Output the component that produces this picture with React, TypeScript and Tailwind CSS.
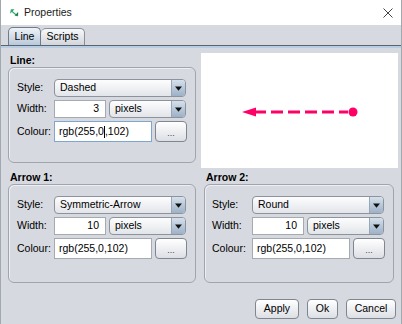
import React from "react";

const Combo = ({ w, text }: { w: string; text: string }) => (
  <div
    className={`${w} h-full flex items-stretch rounded-[4px] border border-[#8d939b] bg-gradient-to-b from-[#fdfdfe] to-[#e2e5e9] overflow-hidden`}
  >
    <div className="flex-1 flex items-center pl-[5px] text-black">{text}</div>
    <div className="w-[14px] flex items-center justify-center border-l border-[#9aa6b3] bg-gradient-to-b from-[#d5e0ec] to-[#9db1c7]">
      <svg width="7" height="5" viewBox="0 0 7 5">
        <path d="M0 0.5 H7 L3.5 4.8 Z" fill="#111" />
      </svg>
    </div>
  </div>
);

const Btn = ({ w, children }: { w: string; children: React.ReactNode }) => (
  <div
    className={`${w} h-full flex items-center justify-center rounded-[4px] border border-[#80868f] bg-gradient-to-b from-[#ffffff] to-[#dcdfe4] text-black shadow-[inset_0_1px_0_#ffffff]`}
  >
    {children}
  </div>
);

const Input = ({ w, children, right, focus }: { w: string; children: React.ReactNode; right?: boolean; focus?: boolean }) => (
  <div
    className={`${w} h-full flex items-center bg-white border ${focus ? "border-[#7fa6cf]" : "border-[#a5aab1]"} ${right ? "justify-end pr-[6px]" : "pl-[4px]"} text-black`}
  >
    {children}
  </div>
);

const Group = ({
  h,
  labelW,
  labelPl,
  style,
  width,
  caret,
}: {
  h: string;
  labelW: string;
  labelPl: string;
  style: string;
  width: string;
  caret?: boolean;
}) => (
  <div
    className={`${h} w-full rounded-[6px] border border-[#a0a5ac] shadow-[inset_1px_1px_0_#eceef1] flex flex-col gap-[3px] pt-[11px]`}
  >
    <div className={`flex items-center h-[18px] ${labelPl}`}>
      <div className={`${labelW} shrink-0`}>Style:</div>
      <Combo w="w-[132px]" text={style} />
    </div>
    <div className={`flex items-center h-[18px] ${labelPl}`}>
      <div className={`${labelW} shrink-0`}>Width:</div>
      <Input w="w-[52px]" right>
        {width}
      </Input>
      <div className="w-[3px]" />
      <Combo w="w-[77px]" text="pixels" />
    </div>
    <div className={`flex items-center h-[21px] ${labelPl}`}>
      <div className={`${labelW} shrink-0`}>Colour:</div>
      <Input w="w-[98px]" focus={caret}>
        {caret ? (
          <span className="flex items-center">
            rgb(255,0<span className="inline-block w-[1px] h-[12px] bg-black" />,102)
          </span>
        ) : (
          "rgb(255,0,102)"
        )}
      </Input>
      <div className="w-[3px]" />
      <Btn w="w-[32px]">
        <span className="text-[9px] leading-none pt-[3px] text-[#444]">...</span>
      </Btn>
    </div>
  </div>
);

export default function App() {
  return (
    <div
      className="w-[402px] h-[324px] bg-[#d6d9df] flex flex-col border-x border-[#a3a7ae] text-[10.5px] text-black overflow-hidden"
      style={{ fontFamily: '"Liberation Sans", Arial, sans-serif' }}
    >
      {/* Title bar */}
      <div className="h-[25px] bg-white flex items-center shrink-0">
        <svg className="ml-[9px]" width="9" height="9" viewBox="0 0 10 9">
          <path d="M1 1 L5 1 L3 3 L9 8 L8 9 L2 4 L0 6 Z" fill="#2fa86a" />
          <path d="M5 8 L9 8 L9 4 Z" fill="#1d7f4e" />
        </svg>
        <span className="ml-[5px] text-[10.5px] text-[#222]">Properties</span>
        <div className="flex-1" />
        <svg className="mr-[8px]" width="10" height="10" viewBox="0 0 10 10">
          <path d="M0.5 0.5 L9.5 9.5 M9.5 0.5 L0.5 9.5" stroke="#444" strokeWidth="1" />
        </svg>
      </div>

      {/* Tabs */}
      <div className="h-[20px] flex items-end pl-[7px] shrink-0">
        <div className="h-[18px] w-[33px] flex items-center justify-center rounded-t-[5px] border border-b-0 border-[#737a85] bg-gradient-to-b from-[#eef3f8] to-[#b9c9db]">
          Line
        </div>
        <div className="h-[17px] w-[44px] flex items-center justify-center rounded-t-[5px] border border-b-0 border-l-0 border-[#8a9099] bg-gradient-to-b from-[#f7f8f9] to-[#d2d6dc]">
          Scripts
        </div>
      </div>
      <div className="h-[1px] bg-[#5d636c] shrink-0" />
      <div className="h-[2px] bg-[#b7cde3] shrink-0" />

      {/* Content */}
      <div className="flex flex-col pt-[5px]">
        <div className="flex items-start pl-[7px]">
          <div className="w-[188px] flex flex-col">
            <div className="h-[14px] leading-[14px] pl-[2px] font-bold">Line:</div>
            <Group h="h-[96px]" labelW="w-[37px]" labelPl="pl-[8px]" style="Dashed" width="3" caret />
          </div>
          <div className="ml-[5px] w-[197px] h-[115px] bg-white">
            <svg width="197" height="115" viewBox="0 0 197 115">
              <line x1="53" y1="59" x2="147" y2="59" stroke="#ff0066" strokeWidth="3" strokeDasharray="12 5" />
              <path d="M41 59 L55 54.5 L55 63.5 Z" fill="#ff0066" />
              <circle cx="152" cy="59" r="4.5" fill="#ff0066" />
            </svg>
          </div>
        </div>

        <div className="flex items-start pl-[7px] mt-[2px]">
          <div className="w-[188px] flex flex-col">
            <div className="h-[14px] leading-[14px] pl-[2px] font-bold">Arrow 1:</div>
            <Group h="h-[99px]" labelW="w-[37px]" labelPl="pl-[8px]" style="Symmetric-Arrow" width="10" />
          </div>
          <div className="ml-[8px] w-[190px] flex flex-col">
            <div className="h-[14px] leading-[14px] pl-[2px] font-bold">Arrow 2:</div>
            <Group h="h-[99px]" labelW="w-[40px]" labelPl="pl-[7px]" style="Round" width="10" />
          </div>
        </div>

        <div className="h-[20px] mt-[16px] flex justify-end pr-[5px] gap-[8px]">
          <Btn w="w-[44px]">Apply</Btn>
          <Btn w="w-[31px]">Ok</Btn>
          <Btn w="w-[50px]">Cancel</Btn>
        </div>
      </div>
    </div>
  );
}
